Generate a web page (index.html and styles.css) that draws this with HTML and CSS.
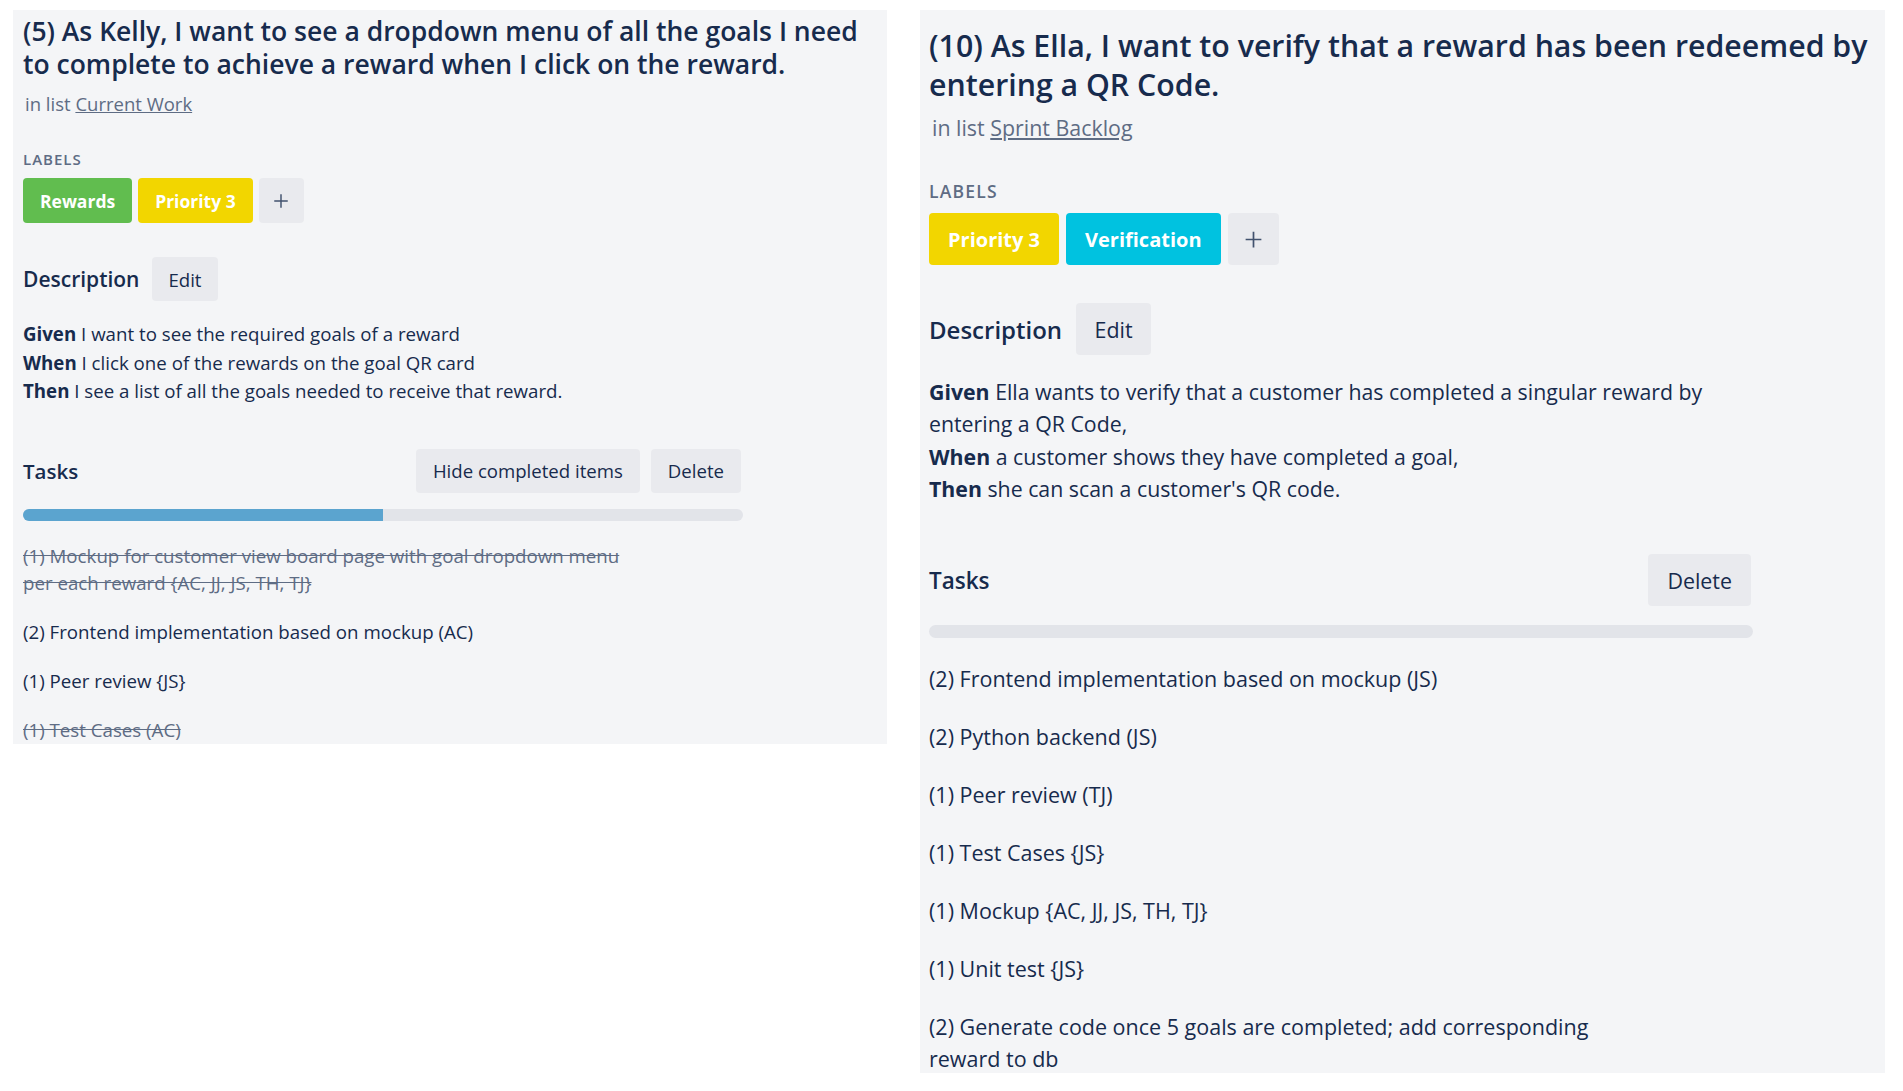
FILE: index.html
```html
<!DOCTYPE html>
<html lang="en">
<head>
<meta charset="utf-8">
<title>Cards</title>
<link rel="stylesheet" href="styles.css">
</head>
<body>
<div class="page">
  <section class="card card-left">
    <h1 class="title">(5) As Kelly, I want to see a dropdown menu of all the goals I need to complete to achieve a reward when I click on the reward.</h1>
    <div class="inlist">in list <a href="#">Current Work</a></div>
    <div class="labels-head">LABELS</div>
    <div class="chips">
      <span class="chip green">Rewards</span>
      <span class="chip yellow">Priority 3</span>
      <span class="chip add"><svg viewBox="0 0 16 16"><path d="M8 2v12M2 8h12"/></svg></span>
    </div>
    <div class="desc-head">
      <h2>Description</h2>
      <span class="btn">Edit</span>
    </div>
    <div class="desc">
      <p><b>Given</b> I want to see the required goals of a reward<br><b>When</b> I click one of the rewards on the goal QR card<br><b>Then</b> I see a list of all the goals needed to receive that reward.</p>
    </div>
    <div class="tasks">
      <div class="tasks-head">
        <h2>Tasks</h2>
        <div class="btns">
          <span class="btn">Hide completed items</span>
          <span class="btn">Delete</span>
        </div>
      </div>
      <div class="progress"><div class="fill" style="width:50%"></div></div>
      <ul class="items">
        <li class="done">(1) Mockup for customer view board page with goal dropdown menu per each reward {AC, JJ, JS, TH, TJ}</li>
        <li>(2) Frontend implementation based on mockup (AC)</li>
        <li>(1) Peer review {JS}</li>
        <li class="done">(1) Test Cases (AC)</li>
      </ul>
    </div>
  </section>

  <section class="card card-right">
    <h1 class="title">(10) As Ella, I want to verify that a reward has been redeemed by entering a QR Code.</h1>
    <div class="inlist">in list <a href="#">Sprint Backlog</a></div>
    <div class="labels-head">LABELS</div>
    <div class="chips">
      <span class="chip yellow">Priority 3</span>
      <span class="chip sky">Verification</span>
      <span class="chip add"><svg viewBox="0 0 16 16"><path d="M8 2v12M2 8h12"/></svg></span>
    </div>
    <div class="desc-head">
      <h2>Description</h2>
      <span class="btn">Edit</span>
    </div>
    <div class="desc">
      <p><b>Given</b> Ella wants to verify that a customer has completed a singular reward by entering a QR Code,<br><b>When</b> a customer shows they have completed a goal,<br><b>Then</b> she can scan a customer's QR code.</p>
    </div>
    <div class="tasks">
      <div class="tasks-head">
        <h2>Tasks</h2>
        <div class="btns">
          <span class="btn">Delete</span>
        </div>
      </div>
      <div class="progress"><div class="fill" style="width:0%"></div></div>
      <ul class="items">
        <li>(2) Frontend implementation based on mockup (JS)</li>
        <li>(2) Python backend (JS)</li>
        <li>(1) Peer review (TJ)</li>
        <li>(1) Test Cases {JS}</li>
        <li>(1) Mockup {AC, JJ, JS, TH, TJ}</li>
        <li>(1) Unit test {JS}</li>
        <li>(2) Generate code once 5 goals are completed; add corresponding reward to db</li>
      </ul>
    </div>
  </section>
</div>
</body>
</html>
```

FILE: styles.css
```css
* { box-sizing: border-box; }
html, body { margin: 0; padding: 0; background: #ffffff; }
body { font-family: "Open Sans", "Noto Sans", sans-serif; color: #172b4d; }

.page {
  display: flex;
  align-items: flex-start;
  gap: 33px;
  padding: 10px 0 0 13px;
}

.card {
  background: #f4f5f7;
  overflow: hidden;
}

.title { margin: 0; font-weight: 600; }
.inlist { color: #5e6c84; }
.inlist a { color: #5e6c84; text-decoration: underline; }
.labels-head { color: #5e6c84; font-weight: 600; }
.chips { display: flex; }
.chip {
  display: flex; align-items: center; justify-content: center;
  color: #fff; font-weight: 700; border-radius: 4px;
}
.chip.green { background: #61bd4f; }
.chip.yellow { background: #f2d600; }
.chip.sky { background: #00c2e0; }
.chip.add { background: #e9eaee; }
.chip.add svg { fill: none; stroke: #42526e; stroke-width: 1.3; }

.desc-head { display: flex; align-items: center; }
.desc-head h2, .tasks-head h2 { margin: 0; font-weight: 600; }
.btn {
  display: flex; align-items: center; justify-content: center;
  background: #e9eaee; color: #172b4d; border-radius: 4px;
}
.desc p { margin: 0; }
.desc b { font-weight: 700; }

.tasks-head { display: flex; align-items: center; justify-content: space-between; }
.btns { display: flex; }
.progress { background: #e2e4e9; overflow: hidden; }
.progress .fill { height: 100%; background: #5ba4cf; }
.items { list-style: none; margin: 0; padding: 0; display: flex; flex-direction: column; }
.items li.done { color: #5e6c84; text-decoration: line-through; }

/* ---------- left card ---------- */
.card-left { width: 874px; height: 734px; padding: 5px 6px 0 10px; }
.card-left .title { font-size: 26.5px; line-height: 33px; }
.card-left .inlist { font-size: 18.5px; line-height: 24px; margin-top: 11px; padding-left: 2px; }
.card-left .labels-head { font-size: 15px; line-height: 20px; letter-spacing: 1px; margin-top: 33px; }
.card-left .chips { margin-top: 9px; gap: 6px; }
.card-left .chip { height: 45px; padding: 0 17px; font-size: 17.5px; }
.card-left .chip.add { width: 45px; padding: 0; }
.card-left .chip.add svg { width: 18px; height: 18px; }
.card-left .desc-head { margin-top: 34px; gap: 13px; }
.card-left .desc-head h2 { font-size: 21px; }
.card-left .btn { height: 44px; padding: 0 17px; font-size: 18.6px; }
.card-left .desc-head .btn { padding: 0 16px; }
.card-left .desc { margin-top: 19px; font-size: 18.7px; line-height: 28.5px; }
.card-left .tasks { width: 718px; margin-top: 43px; }
.card-left .tasks-head h2 { font-size: 20.5px; }
.card-left .btns { gap: 11px; }
.card-left .progress { width: 720px; margin-top: 16px; height: 12px; border-radius: 6px; }
.card-left .items { margin-top: 21px; gap: 22px; }
.card-left .items li { font-size: 18.7px; line-height: 27px; max-width: 620px; }

/* ---------- right card ---------- */
.card-right { width: 965px; height: 1063px; padding: 16px 5px 0 9px; }
.card-right .title { font-size: 30.3px; line-height: 39px; }
.card-right .inlist { font-size: 21.4px; line-height: 28px; margin-top: 10px; padding-left: 3px; }
.card-right .labels-head { font-size: 17.5px; line-height: 22px; letter-spacing: 1.2px; margin-top: 38px; }
.card-right .chips { margin-top: 11px; gap: 7px; }
.card-right .chip { height: 52px; padding: 0 19px; font-size: 20px; }
.card-right .chip.add { width: 51px; padding: 0; }
.card-right .chip.add svg { width: 21px; height: 21px; }
.card-right .desc-head { margin-top: 38px; gap: 14px; }
.card-right .desc-head h2 { font-size: 24px; }
.card-right .btn { height: 52px; padding: 0 19px; font-size: 21.4px; }
.card-right .desc-head .btn { padding: 0 18.5px; }
.card-right .desc { margin-top: 21px; font-size: 21.3px; line-height: 32.3px; max-width: 800px; }
.card-right .tasks { width: 822px; margin-top: 49px; }
.card-right .tasks-head h2 { font-size: 22.5px; }
.card-right .progress { width: 824px; margin-top: 19px; height: 13px; border-radius: 7px; }
.card-right .items { margin-top: 25px; gap: 26px; }
.card-right .items li { font-size: 21.5px; line-height: 32px; max-width: 700px; }
```
